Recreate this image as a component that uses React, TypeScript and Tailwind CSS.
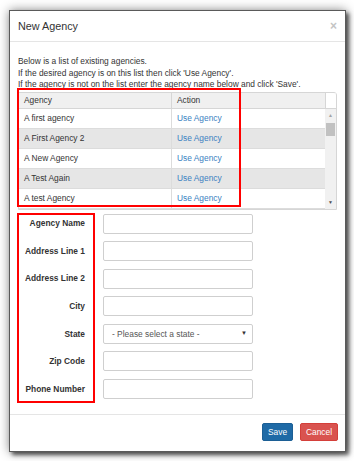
import React from 'react';

const agencies = ['A first agency', 'A First Agency 2', 'A New Agency', 'A Test Again', 'A test Agency'];

const fields = ['Agency Name', 'Address Line 1', 'Address Line 2', 'City', 'State', 'Zip Code', 'Phone Number'];

const App: React.FC = () => {
  return (
    <div
      className="relative w-[354px] h-[461px] overflow-hidden bg-white pt-[10px] pl-[9px]"
      style={{ fontFamily: '"Liberation Sans", Arial, sans-serif' }}
    >
      {/* Modal */}
      <div className="w-[337px] h-[442px] bg-white border border-[#5a5a5a] shadow-[3px_3px_4px_rgba(0,0,0,0.6),0_0_10px_rgba(0,0,0,0.45)] flex flex-col">
        {/* Header */}
        <div className="h-[31px] shrink-0 border-b border-[#e5e5e5] flex items-center justify-between pl-[8px] pr-[8px]">
          <span className="text-[10.8px] text-[#333]">New Agency</span>
          <span className="text-[12px] font-bold text-[#c4c4c4] leading-none">×</span>
        </div>

        {/* Body */}
        <div className="px-[8px] pt-[14px]">
          <div className="text-[8.4px] leading-[11.5px] text-[#333]">
            <p>Below is a list of existing agencies.</p>
            <p>If the desired agency is on this list then click 'Use Agency'.</p>
            <p>If the agency is not on the list enter the agency name below and click 'Save'.</p>
          </div>

          {/* Agency table */}
          <div className="mt-[1px] w-[319px] border border-[#d6d6d6] rounded-tr-[3px] text-[8.4px] text-[#333]">
            <div className="flex h-[16px] bg-[#f0f0f0] border-b border-[#d6d6d6]">
              <div className="w-[153px] flex items-center pl-[5px] border-r border-[#d6d6d6]">Agency</div>
              <div className="w-[153px] flex items-center pl-[5px]">Action</div>
              <div className="w-[11px] bg-white border-l border-[#d6d6d6] rounded-tr-[3px]"></div>
            </div>
            <div className="flex h-[100px] overflow-hidden">
              <div className="w-[306px]">
                {agencies.map((name, i) => (
                  <div
                    key={name}
                    className={`flex h-[20px] border-b border-[#dcdcdc] ${i % 2 === 1 ? 'bg-[#e6e6e6]' : 'bg-white'}`}
                  >
                    <div className="w-[153px] flex items-center pl-[5px] border-r border-[#dcdcdc]">{name}</div>
                    <div className="w-[153px] flex items-center pl-[5px] text-[#3a7fc1]">Use Agency</div>
                  </div>
                ))}
              </div>
              {/* Scrollbar */}
              <div className="w-[11px] bg-[#f1f1f1] flex flex-col items-center justify-between py-[4px]">
                <div className="flex flex-col items-center w-full">
                  <span className="text-[5px] leading-none text-[#a3a3a3]">▲</span>
                  <div className="mt-[5px] w-[9px] h-[13px] bg-[#c1c1c1]"></div>
                </div>
                <span className="text-[5px] leading-none text-[#505050]">▼</span>
              </div>
            </div>
          </div>

          {/* Form */}
          <div className="mt-[4px] flex flex-col gap-[7.6px]">
            {fields.map((label) => (
              <div key={label} className="flex items-center h-[20px]">
                <label className="w-[67px] text-right text-[8.4px] font-bold text-[#333]">{label}</label>
                <div className="ml-[18px] w-[150px] h-[20px] border border-[#cfcfcf] rounded-[2px] bg-white flex items-center justify-between pl-[8px] pr-[5px]">
                  {label === 'State' && (
                    <>
                      <span className="text-[8.4px] text-[#555]">- Please select a state -</span>
                      <span className="text-[6px] text-[#333]">▼</span>
                    </>
                  )}
                </div>
              </div>
            ))}
          </div>
        </div>

        {/* Footer */}
        <div className="mt-auto h-[37px] border-t border-[#e5e5e5] flex items-start justify-end gap-[7px] pt-[8px] pr-[7px]">
          <button className="w-[31px] h-[18px] bg-[#1f6aa6] border border-[#1c5f95] rounded-[2px] text-white text-[8.4px]">Save</button>
          <button className="w-[38px] h-[18px] bg-[#d9534f] border border-[#d43f3a] rounded-[2px] text-white text-[8.4px]">Cancel</button>
        </div>
      </div>

      {/* Annotation boxes */}
      <div className="absolute left-[17px] top-[88px] w-[224px] h-[119px] border-2 border-[#ff0000]"></div>
      <div className="absolute left-[17px] top-[213px] w-[78px] h-[190px] border-2 border-[#ff0000]"></div>
    </div>
  );
};

export default App;
